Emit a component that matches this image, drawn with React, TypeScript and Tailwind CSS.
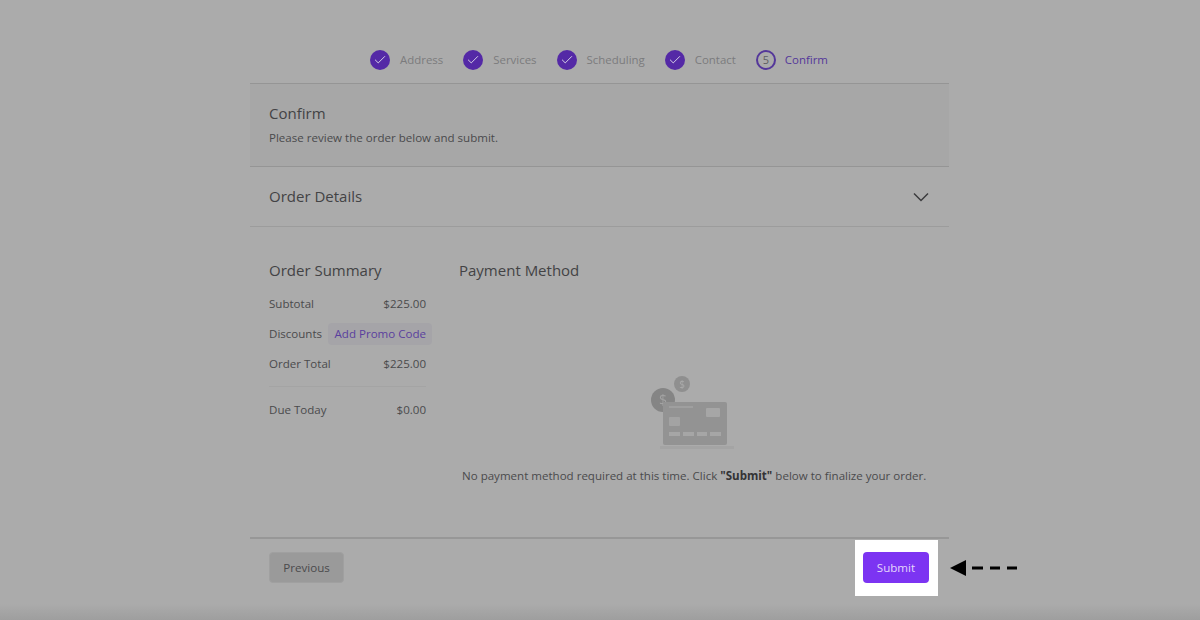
import React from "react";
import { Check } from "lucide-react";

const steps = ["Address", "Services", "Scheduling", "Contact"];

const Row = ({ label, value }: { label: string; value: string }) => (
  <div className="flex justify-between h-[30px] items-center text-[11.55px] text-[#4a4a4c]">
    <span>{label}</span>
    <span>{value}</span>
  </div>
);

const CardArt = () => (
  <svg width="90" height="78" viewBox="0 0 90 78" className="block blur-[0.5px]">
    <rect x="10" y="70" width="74" height="3" fill="#a4a4a4" />
    <circle cx="13" cy="24" r="12" fill="#858585" />
    <text x="13" y="29" textAnchor="middle" fontSize="14" fill="#a3a3a3" fontFamily="Open Sans">$</text>
    <circle cx="32" cy="8" r="8" fill="#8f8f8f" />
    <text x="32" y="12" textAnchor="middle" fontSize="10" fill="#ababab" fontFamily="Open Sans">$</text>
    <rect x="13" y="26" width="64" height="43" rx="2" fill="#939393" />
    <rect x="19" y="30" width="24" height="2" fill="#9f9f9f" />
    <rect x="56" y="32" width="14" height="9" rx="1" fill="#a6a6a6" />
    <rect x="19" y="41" width="11" height="9" rx="1" fill="#a3a3a3" />
    <rect x="19" y="56" width="11" height="4" fill="#a6a6a6" />
    <rect x="33" y="56" width="11" height="4" fill="#a6a6a6" />
    <rect x="47" y="56" width="10" height="4" fill="#a6a6a6" />
    <rect x="60" y="56" width="11" height="4" fill="#a6a6a6" />
  </svg>
);

const DashedArrow = () => (
  <svg width="68" height="16" viewBox="0 0 68 16" className="block">
    <polygon points="0,8 16,0 16,16" fill="#000" />
    <rect x="22" y="6.5" width="11" height="3" fill="#000" />
    <rect x="40" y="6.5" width="10" height="3" fill="#000" />
    <rect x="57" y="6.5" width="10" height="3" fill="#000" />
  </svg>
);

export default function App() {
  return (
    <div className="relative h-[620px] w-[1200px] overflow-hidden bg-[#ababab] font-['Open_Sans',sans-serif]">
      <div className="w-[699px] ml-[250px] h-[596px] flex flex-col">
        <div className="h-[83px] pt-[50px] pl-[120px] flex items-start">
          {steps.map((s) => (
            <div key={s} className="flex items-center h-5 mr-5">
              <span className="w-5 h-5 rounded-full bg-[#5429a6] flex items-center justify-center">
                <Check size={14} strokeWidth={1.7} className="text-[#d6d0e6]" />
              </span>
              <span className="ml-[10px] text-[11.45px] text-[#7b7b7d]">{s}</span>
            </div>
          ))}
          <div className="flex items-center h-5">
            <span className="w-5 h-5 rounded-full border-2 border-[#54379a] flex items-center justify-center text-[11px] text-[#5e5e62]">
              5
            </span>
            <span className="ml-[9px] text-[11.45px] text-[#54379a]">Confirm</span>
          </div>
        </div>

        <div className="h-[84px] shrink-0 border-y border-[#959595] bg-[#a7a7a7] px-[19px] pt-[17px]">
          <h1 className="text-[15px] leading-[24px] text-[#434345]">Confirm</h1>
          <p className="mt-[4px] text-[11.55px] leading-[18px] text-[#4a4a4c]">
            Please review the order below and submit.
          </p>
        </div>

        <div className="h-[60px] shrink-0 border-b border-[#9c9c9c] px-[19px] flex items-center justify-between">
          <h2 className="text-[15px] text-[#434345]">Order Details</h2>
          <svg width="16" height="10" viewBox="0 0 16 10" fill="none" className="block mr-px">
            <path d="M1 1.5 L8 8.5 L15 1.5" stroke="#3c3c3e" strokeWidth="1.5" />
          </svg>
        </div>

        <div className="flex-1 flex px-[19px] pt-[32px]">
          <div className="w-[157px] shrink-0">
            <h2 className="text-[15px] leading-[22px] text-[#434345] mb-[8px]">Order Summary</h2>
            <Row label="Subtotal" value="$225.00" />
            <div className="flex justify-between h-[30px] items-center text-[11.55px] text-[#4a4a4c]">
              <span>Discounts</span>
              <span className="-mr-[6px] pl-[7px] pr-[6px] h-[22px] leading-[22px] rounded-[4px] bg-[#a5a4a8] text-[#5a3f9e] whitespace-nowrap">
                Add Promo Code
              </span>
            </div>
            <Row label="Order Total" value="$225.00" />
            <div className="border-t border-[#a4a4a4] mt-[7px] mb-[8px]" />
            <Row label="Due Today" value="$0.00" />
          </div>
          <div className="flex-1 ml-[33px]">
            <h2 className="text-[15px] leading-[22px] text-[#434345]">Payment Method</h2>
            <div className="mt-[95px] ml-[191px]">
              <CardArt />
            </div>
            <p className="mt-[13px] text-[11.55px] text-[#4a4a4c] ml-[3px] whitespace-nowrap">
              No payment method required at this time. Click <b className="text-[#333335]">"Submit"</b> below to finalize your order.
            </p>
          </div>
        </div>

        <div className="h-[59px] shrink-0 border-t-2 border-[#979797] px-[19px] flex items-start justify-between">
          <button className="mt-[13px] w-[75px] h-[31px] rounded-[4px] bg-[#9a9a9a] border border-[#a0a0a0] text-[11.6px] text-[#4a4a4c]">
            Previous
          </button>
          <div className="mt-px -mr-[8px] pl-2 pr-[9px] pt-3 pb-[13px] bg-white">
            <button className="block w-[66px] h-[31px] rounded-[4px] bg-[#7c34f2] text-[11.6px] text-[#e4d5fb]">
              Submit
            </button>
          </div>
        </div>
      </div>

      {/* page edge shadow + annotation on top of the dimmed page */}
      <div className="absolute left-0 right-0 bottom-0 h-[16px] bg-gradient-to-b from-[#ababab] to-[#9e9e9e]" />
      <div className="absolute left-[950px] top-[560px]">
        <DashedArrow />
      </div>
    </div>
  );
}
